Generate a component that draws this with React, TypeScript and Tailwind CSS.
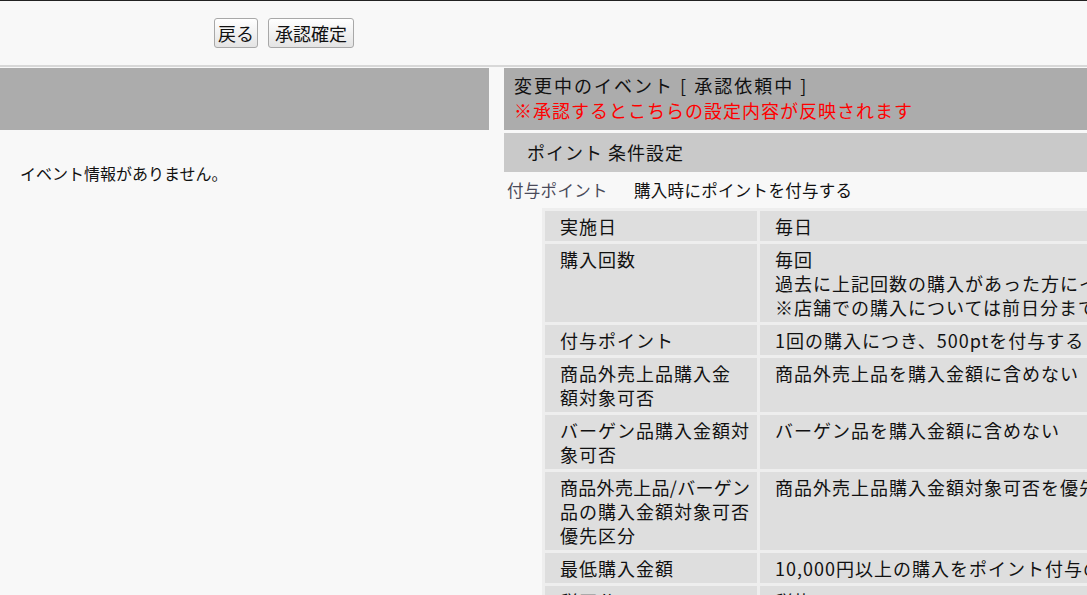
import React from "react";

const font = "font-['Noto_Sans_CJK_JP','Noto_Sans',sans-serif]";

type Row = { label: React.ReactNode; value: React.ReactNode };

const rows: Row[] = [
  { label: "実施日", value: "毎日" },
  {
    label: "購入回数",
    value: (
      <>
        毎回
        <br />
        過去に上記回数の購入があった方にイベント期間中の購入でポイントを付与します
        <br />
        ※店舗での購入については前日分までが対象となります
      </>
    ),
  },
  { label: "付与ポイント", value: "1回の購入につき、500ptを付与する" },
  {
    label: (
      <>
        商品外売上品購入金
        <br />
        額対象可否
      </>
    ),
    value: "商品外売上品を購入金額に含めない",
  },
  {
    label: (
      <>
        バーゲン品購入金額対
        <br />
        象可否
      </>
    ),
    value: "バーゲン品を購入金額に含めない",
  },
  {
    label: (
      <>
        <span className="tracking-[0.3px]">商品外売上品/バーゲン</span>
        <br />
        品の購入金額対象可否
        <br />
        優先区分
      </>
    ),
    value: "商品外売上品購入金額対象可否を優先する",
  },
  { label: "最低購入金額", value: "10,000円以上の購入をポイント付与の対象とする" },
  { label: "税区分", value: "税抜" },
];

export default function App() {
  return (
    <div className={`w-[1087px] h-[595px] overflow-hidden bg-[#f8f8f8] text-black ${font}`}>
      {/* top bar */}
      <div className="h-[67px] border-t border-[#222222] border-b-2 border-b-[#d8d8d8] flex items-start gap-[10px] pt-[17px] pl-[214px]">
        <button className="h-[30px] w-[44px] border border-[#a8a8a8] rounded-[3px] bg-linear-to-b from-white to-[#e4e4e4] text-[18px] leading-none text-[#111]">
          戻る
        </button>
        <button className="h-[30px] w-[86px] border border-[#a8a8a8] rounded-[3px] bg-linear-to-b from-white to-[#e4e4e4] text-[18px] leading-none text-[#111]">
          承認確定
        </button>
      </div>

      <div className="mt-[1px] flex items-start">
        {/* left column */}
        <div className="w-[489px] shrink-0">
          <div className="h-[62px] bg-[#acacac]" />
          <div className="pl-[20px] pt-[31px] text-[16px] leading-[24px] text-[#111]">
            イベント情報がありません。
          </div>
        </div>

        {/* right column */}
        <div className="ml-[15px] w-[900px] shrink-0">
          <div className="h-[62px] bg-[#acacac] pl-[10px] pt-[5px] text-[18px] leading-[25px] whitespace-nowrap">
            <div className="tracking-[2px] text-[#111]">変更中のイベント [ 承認依頼中 ]</div>
            <div className="tracking-[1px] text-[#ff0000]">※承認するとこちらの設定内容が反映されます</div>
          </div>
          <div className="mt-[3px] h-[39px] bg-[#c9c9c9] pl-[23px] flex items-center text-[18px] tracking-[1px] text-[#111]">
            ポイント 条件設定
          </div>
          <div className="h-[36px] flex items-center text-[16.5px] tracking-[0.3px] whitespace-nowrap">
            <span className="pl-[3px] w-[130px] text-[#4a4a5a]">付与ポイント</span>
            <span className="text-[#111]">購入時にポイントを付与する</span>
          </div>
          <div className="ml-[38px] grid grid-cols-[212px_1fr] gap-[3px] p-[3px] bg-[#eeeeee] text-[18px] leading-[24px] tracking-[1px] text-[#111]">
            {rows.map((r, i) => (
              <React.Fragment key={i}>
                <div className="bg-[#dedede] py-[3px] pl-[15px] whitespace-nowrap">{r.label}</div>
                <div className="bg-[#dedede] py-[3px] pl-[15px] whitespace-nowrap overflow-hidden">{r.value}</div>
              </React.Fragment>
            ))}
          </div>
        </div>
      </div>
    </div>
  );
}
